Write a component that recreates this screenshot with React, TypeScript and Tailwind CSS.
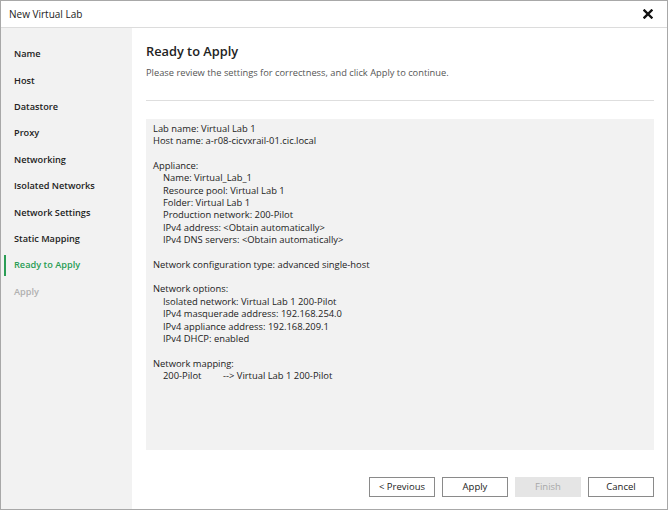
import React from "react";

const steps = [
  "Name",
  "Host",
  "Datastore",
  "Proxy",
  "Networking",
  "Isolated Networks",
  "Network Settings",
  "Static Mapping",
  "Ready to Apply",
  "Apply",
];

type Line = { t: string; i?: boolean } | null;

const lines: Line[] = [
  { t: "Lab name: Virtual Lab 1" },
  { t: "Host name: a-r08-cicvxrail-01.cic.local" },
  null,
  { t: "Appliance:" },
  { t: "Name: Virtual_Lab_1", i: true },
  { t: "Resource pool: Virtual Lab 1", i: true },
  { t: "Folder: Virtual Lab 1", i: true },
  { t: "Production network: 200-Pilot", i: true },
  { t: "IPv4 address: <Obtain automatically>", i: true },
  { t: "IPv4 DNS servers: <Obtain automatically>", i: true },
  null,
  { t: "Network configuration type: advanced single-host" },
  null,
  { t: "Network options:" },
  { t: "Isolated network: Virtual Lab 1 200-Pilot", i: true },
  { t: "IPv4 masquerade address: 192.168.254.0", i: true },
  { t: "IPv4 appliance address: 192.168.209.1", i: true },
  { t: "IPv4 DHCP: enabled", i: true },
  null,
  { t: "Network mapping:" },
];

export default function App() {
  return (
    <div
      className="w-[668px] h-[510px] bg-white text-[#222] flex flex-col border border-[#a8a8a8] overflow-hidden"
      style={{ fontFamily: '"Open Sans", "Noto Sans", sans-serif' }}
    >
      <div className="h-[27px] shrink-0 flex items-center justify-between pl-[8px] pr-[14px] border-b border-[#dcdcdc]">
        <span className="text-[10px] text-[#222]">New Virtual Lab</span>
        <svg width="10" height="10" viewBox="0 0 10 10">
          <path d="M1.5 1.5 L8.5 8.5 M8.5 1.5 L1.5 8.5" stroke="#111" strokeWidth="2.4" strokeLinecap="square" />
        </svg>
      </div>
      <div className="flex flex-1 min-h-0">
        <div className="w-[131px] shrink-0 bg-[#f2f2f2] pt-[13px] flex flex-col">
          {steps.map((s) => {
            const active = s === "Ready to Apply";
            const disabled = s === "Apply";
            return (
              <div key={s} className="relative h-[26.4px] flex items-center pl-[13px]">
                {active && <div className="absolute left-[3px] top-[3px] bottom-[3px] w-[2px] bg-[#2a9d55]" />}
                <span
                  className={
                    "text-[9.2px] font-semibold " +
                    (active ? "text-[#2a9d55]" : disabled ? "text-[#b0b0b0]" : "text-[#222]")
                  }
                >
                  {s}
                </span>
              </div>
            );
          })}
        </div>
        <div className="flex-1 flex flex-col pl-[14px] pr-[13px]">
          <div className="text-[12.8px] font-semibold text-[#222] mt-[13px] leading-[20px]">Ready to Apply</div>
          <div className="text-[9.3px] text-[#555] mt-[5px] leading-[14px]">
            Please review the settings for correctness, and click Apply to continue.
          </div>
          <div className="h-px bg-[#dedede] mt-[20px]" />
          <div className="mt-[18px] h-[331px] bg-[#f2f2f2] pl-[7px] pt-[4px] text-[9.4px] leading-[12.35px] text-[#222]">
            {lines.map((l, k) =>
              l ? (
                <div key={k} className={l.i ? "pl-[10px]" : ""}>
                  {l.t}
                </div>
              ) : (
                <div key={k} className="h-[12.35px]" />
              )
            )}
            <div className="pl-[10px] flex">
              <span className="w-[60px]">200-Pilot</span>
              <span>--&gt; Virtual Lab 1 200-Pilot</span>
            </div>
          </div>
          <div className="flex justify-end gap-[7px] mt-[27px]">
            <button className="w-[66px] h-[20px] border border-[#8a8a8a] bg-white text-[9.5px] text-[#222]">&lt; Previous</button>
            <button className="w-[66px] h-[20px] border border-[#8a8a8a] bg-white text-[9.5px] text-[#222]">Apply</button>
            <button className="w-[66px] h-[20px] bg-[#e5e5e5] text-[9.5px] text-[#a8a8a8]">Finish</button>
            <button className="w-[66px] h-[20px] border border-[#8a8a8a] bg-white text-[9.5px] text-[#222]">Cancel</button>
          </div>
        </div>
      </div>
    </div>
  );
}
